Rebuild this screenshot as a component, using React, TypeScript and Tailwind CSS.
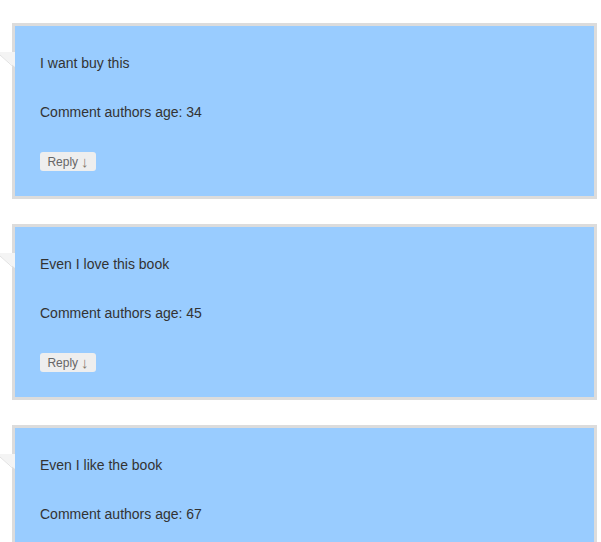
const comments = [
  {text: "I want buy this", age: 34},
  {text: "Even I love this book", age: 45},
  {text: "Even I like the book", age: 67},
];

const CommentCard: React.FC<{text: string; age: number}> = ({text, age}) => {
  return (
    <div className="relative border-[3px] border-[#dcdcdc] bg-[#99ccff] pl-[25px] pr-6 pt-[27px] pb-[25px] text-[#333]">
      <svg
        className="absolute left-[-15px] top-[26px]"
        width="15"
        height="16"
        viewBox="0 0 15 16"
      >
        <polygon points="0,0 15,0 15,15 0,3" fill="#f4f4f4" />
        <line x1="0" y1="3" x2="13" y2="14.5" stroke="#e2e2e2" strokeWidth="1" />
      </svg>
      <p className="text-[14px] leading-[20px]">{text}</p>
      <p className="mt-[29px] text-[14px] leading-[20px]">
        Comment authors age: {age}
      </p>
      <button className="mt-[30px] flex h-[19px] w-[56px] items-center justify-center gap-[3px] rounded-[3px] bg-[#eeeeee] text-[12px] leading-none text-[#666]">
        <span>Reply</span>
        <span className="text-[15px] leading-none text-[#857a6c]">↓</span>
      </button>
    </div>
  );
};

export default function App() {
  return (
    <div
      className="min-h-[542px] bg-white pl-[12px] pr-[4px] pt-[23px]"
      style={{fontFamily: '"Liberation Sans", Arial, sans-serif'}}
    >
      <div className="flex flex-col gap-[25px]">
        {comments.map((c) => (
          <CommentCard key={c.text} text={c.text} age={c.age} />
        ))}
      </div>
    </div>
  );
}
